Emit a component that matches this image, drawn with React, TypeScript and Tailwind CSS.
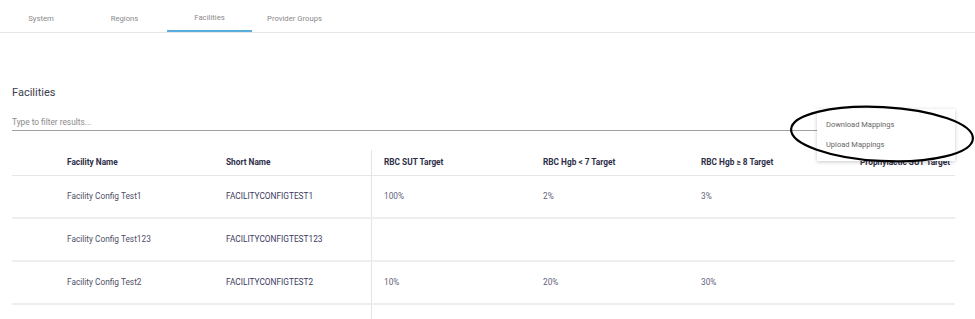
const TABS = ['System', 'Regions', 'Facilities', 'Provider Groups']

const COLUMNS = ['Facility Name', 'Short Name', 'RBC SUT Target', 'RBC Hgb < 7 Target', 'RBC Hgb ≥ 8 Target', 'Prophylactic SUT Target']

const ROWS = [
  ['Facility Config Test1', 'FACILITYCONFIGTEST1', '100%', '2%', '3%', ''],
  ['Facility Config Test123', 'FACILITYCONFIGTEST123', '', '', '', ''],
  ['Facility Config Test2', 'FACILITYCONFIGTEST2', '10%', '20%', '30%', ''],
  ['', '', '', '', '', ''],
]

const GRID = 'grid grid-cols-[43px_159px_158px_159px_158px_159px_107px]'

export default function App() {
  return (
    <div className="relative h-[319px] w-[975px] overflow-hidden bg-white font-['Roboto',sans-serif]">
      {/* Tabs */}
      <nav className="flex h-[33px] border-b border-[#e6e6e6]">
        {TABS.map((tab, i) => (
          <div
            key={tab}
            className={
              tab === 'Facilities'
                ? 'flex w-[85px] items-center justify-center border-b-2 border-[#5aaede] pt-[6px] text-[7.7px] text-[#8a8a8a]'
                : i === 0
                  ? 'flex w-[82px] items-center justify-center pt-[6px] text-[7.7px] text-[#8a8a8a]'
                  : 'flex w-[85px] items-center justify-center pt-[6px] text-[7.7px] text-[#8a8a8a]'
            }
          >
            {tab}
          </div>
        ))}
      </nav>

      <main className="pl-[12px] pr-[20px]">
        <h1 className="pt-[53px] text-[11px] leading-[14px] text-[#3c3c4c]">Facilities</h1>

        <div className="mt-[15px] flex h-[16px] items-center border-b border-[#a0a0a0] text-[8.3px] text-[#8a8a8a]">
          Type to filter results...
        </div>

        {/* Table */}
        <div className="mt-[19px]">
          <div className={`${GRID} h-[26px] border-b border-[#e6e6e6] text-[8.3px] font-bold text-[#2e2e48]`}>
            <div />
            {COLUMNS.map((col, i) => (
              <div
                key={col}
                className={
                  i === 1
                    ? 'flex items-center whitespace-nowrap border-r border-[#e4e4e4] pl-[12px]'
                    : 'flex items-center whitespace-nowrap pl-[12px]'
                }
              >
                <span>{col}</span>
              </div>
            ))}
          </div>

          {ROWS.map((row, r) => (
            <div key={r} className={`${GRID} h-[43px] border-b-2 border-[#eeeeee] text-[8.3px]`}>
              <div />
              {row.map((cell, i) => (
                <div
                  key={i}
                  className={
                    i === 0
                      ? 'flex items-center pl-[12px] text-[#4f4f66]'
                      : i === 1
                        ? 'flex items-center border-r border-[#e4e4e4] pl-[12px] text-[#3a3a60]'
                        : 'flex items-center pl-[12px] text-[#62627a]'
                  }
                >
                  {cell}
                </div>
              ))}
            </div>
          ))}
        </div>
      </main>

      {/* Actions menu */}
      <div className="absolute left-[817px] top-[109px] flex w-[138px] flex-col bg-white py-[6px] shadow-[0_1px_4px_rgba(0,0,0,0.22)]">
        <div className="flex h-[20px] items-center pl-[9px] text-[7.5px] text-[#666666]">Download Mappings</div>
        <div className="flex h-[20px] items-center pl-[9px] text-[7.5px] text-[#666666]">Upload Mappings</div>
      </div>

      {/* Hand-drawn annotation */}
      <svg className="pointer-events-none absolute left-0 top-0" width="975" height="319">
        <ellipse cx="882" cy="134" rx="91" ry="27" fill="none" stroke="#000" strokeWidth="2.2" transform="rotate(3 882 134)" />
      </svg>
    </div>
  )
}
